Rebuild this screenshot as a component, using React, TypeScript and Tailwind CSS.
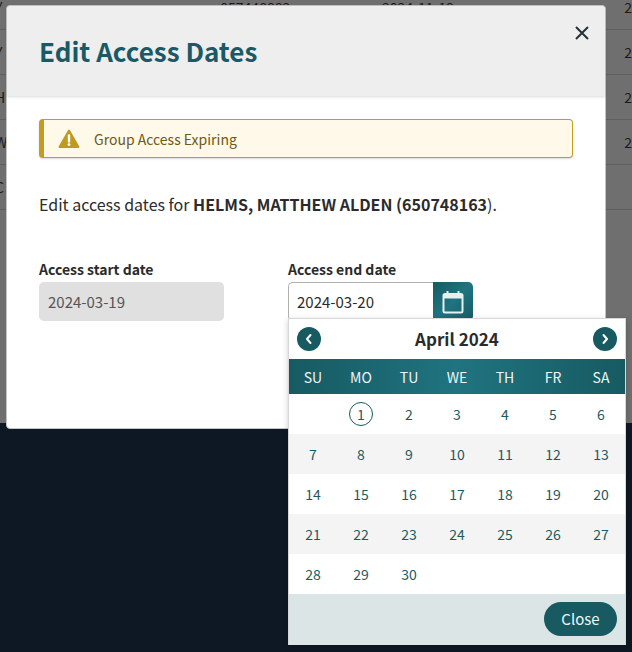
const weeks: (number | null)[][] = [
  [null, 1, 2, 3, 4, 5, 6],
  [7, 8, 9, 10, 11, 12, 13],
  [14, 15, 16, 17, 18, 19, 20],
  [21, 22, 23, 24, 25, 26, 27],
  [28, 29, 30, null, null, null, null],
];
const days = ["SU", "MO", "TU", "WE", "TH", "FR", "SA"];
const rows = [
  ["Y", "057448882", "2024-11-19", "2"],
  ["Y", "", "", "2"],
  ["H", "", "", "2"],
  ["W", "", "", "2"],
  ["C", "", "", ""],
];

function Chevron({ dir }: { dir: "l" | "r" }) {
  return (
    <button className="flex h-6 w-6 items-center justify-center rounded-full bg-[#175a62]">
      <svg width="10" height="12" viewBox="0 0 10 12" fill="none" stroke="white" strokeWidth="2" strokeLinecap="round" strokeLinejoin="round">
        <path d={dir === "l" ? "M6.5 2 L3 6 L6.5 10" : "M3.5 2 L7 6 L3.5 10"} />
      </svg>
    </button>
  );
}

export default function App() {
  return (
    <div className="relative flex h-[652px] w-[632px] flex-col overflow-hidden bg-[#0e1824] font-['Noto_Sans_CJK_SC','Liberation_Sans',sans-serif]">
      <div className="h-[423px] overflow-hidden bg-[#6f6f6f]">
        <div className="-mt-[15px]">
          {rows.map((r, i) => (
            <div key={i} className="flex h-[45px] items-center border-b border-[#5f5f5f] text-[14px] leading-5 text-[#1a1a1a]">
              <span className="-ml-[5px] w-[227px]">{r[0]}</span>
              <span className="w-[163px]">{r[1]}</span>
              <span className="w-[244px]">{r[2]}</span>
              <span>{r[3]}</span>
            </div>
          ))}
        </div>
      </div>

      <div className="absolute left-[6px] top-[5px] flex h-[424px] w-[600px] flex-col rounded-[4px] border border-[#c4c4c4] bg-white">
        <div className="relative flex h-[90px] shrink-0 items-center rounded-t-[4px] bg-[#eeeeee] pl-[32px] shadow-[0_1px_3px_rgba(0,0,0,0.15)]">
          <h1 className="text-[26px] font-semibold leading-8 text-[#1a5a66]">Edit Access Dates</h1>
          <button className="absolute left-[568px] top-[20px]">
            <svg width="14" height="14" viewBox="0 0 14 14" fill="none" stroke="#263238" strokeWidth="2" className="block">
              <path d="M1 1 L13 13 M13 1 L1 13" />
            </svg>
          </button>
        </div>

        <div className="flex flex-col px-[32px]">
          <div className="mt-[23px] flex h-[39px] w-[534px] items-center rounded-[4px] border border-l-[5px] border-[#c49c1f] bg-[#fff9ea] pl-[14px] shadow-[0_1px_2px_rgba(0,0,0,0.15)]">
            <svg width="22" height="20" viewBox="0 0 22 20" className="block">
              <path d="M11 1.5 L20.5 18 H1.5 Z" fill="#c09a1f" stroke="#c09a1f" strokeWidth="2" strokeLinejoin="round" />
              <path d="M11 6.5 V12.5" stroke="white" strokeWidth="2.4" strokeLinecap="round" />
              <circle cx="11" cy="15.6" r="1.4" fill="white" />
            </svg>
            <span className="ml-[14px] text-[14px] leading-5 text-[#6e5a10]">Group Access Expiring</span>
          </div>

          <p className="mt-[34px] text-[16px] leading-6 text-[#2b2b2b]">
            Edit access dates for <strong className="font-semibold">HELMS, MATTHEW ALDEN (650748163</strong>).
          </p>

          <div className="mt-[43px] flex">
            <div className="w-[249px]">
              <label className="block text-[14px] font-semibold leading-5 text-[#2b2b2b]">Access start date</label>
              <div className="mt-[3px] flex h-[39px] w-[185px] items-center rounded-[5px] bg-[#e0e0e0] pl-[9px] text-[15px] leading-5 text-[#555555]">
                2024-03-19
              </div>
            </div>
            <div className="relative">
              <label className="block text-[14px] font-semibold leading-5 text-[#2b2b2b]">Access end date</label>
              <div className="mt-[3px] flex h-[39px] w-[185px]">
                <div className="flex w-[145px] items-center rounded-l-[5px] border border-r-0 border-[#b0b0b0] pl-[8px] text-[15px] leading-5 text-[#2b2b2b]">
                  2024-03-20
                </div>
                <button className="flex w-[40px] items-center justify-center rounded-r-[5px] bg-gradient-to-br from-[#175a62] via-[#1f7480] to-[#175a62]">
                  <svg width="22" height="24" viewBox="0 0 22 24" className="block" fill="none">
                    <rect x="1.5" y="4" width="19" height="18.5" rx="1.5" stroke="#e6f0f1" strokeWidth="2" />
                    <rect x="1.5" y="4" width="19" height="4.5" fill="#e6f0f1" />
                    <path d="M5.5 1 V4 M16.5 1 V4" stroke="#e6f0f1" strokeWidth="2" />
                  </svg>
                </button>
              </div>

              <div className="absolute left-0 top-[59px] z-10 w-[338px] border border-[#d8d8d8] border-b-0 bg-white shadow-[0_2px_6px_rgba(0,0,0,0.2)]">
                <div className="flex h-[40px] items-center justify-between px-[8px] pb-[1px]">
                  <Chevron dir="l" />
                  <span className="text-[17px] font-bold leading-6 text-[#2b2b2b]">April 2024</span>
                  <Chevron dir="r" />
                </div>
                <div className="grid h-[35px] grid-cols-7 items-center bg-gradient-to-r from-[#175a62] via-[#1f7480] to-[#175a62] text-center text-[14px] leading-5 text-[#f0f6f7]">
                  {days.map((d) => (
                    <span key={d}>{d}</span>
                  ))}
                </div>
                {weeks.map((w, i) => (
                  <div key={i} className={i % 2 === 1 ? "grid h-[40px] grid-cols-7 items-center bg-[#f4f4f4]" : "grid h-[40px] grid-cols-7 items-center bg-white"}>
                    {w.map((d, j) => (
                      <div key={j} className="flex justify-center text-[14px] leading-6 text-[#1d5a63]">
                        {d === 1 ? (
                          <span className="flex h-6 w-6 items-center justify-center rounded-full border border-[#175a62]">1</span>
                        ) : (
                          <span>{d}</span>
                        )}
                      </div>
                    ))}
                  </div>
                ))}
                <div className="flex h-[51px] items-start justify-end bg-[#dce5e6] pr-[8px] pt-[8px]">
                  <button className="h-[34px] w-[73px] rounded-full bg-[#175a62] text-[15px] leading-5 text-[#f2f7f7]">Close</button>
                </div>
              </div>
            </div>
          </div>
        </div>
      </div>
    </div>
  );
}
